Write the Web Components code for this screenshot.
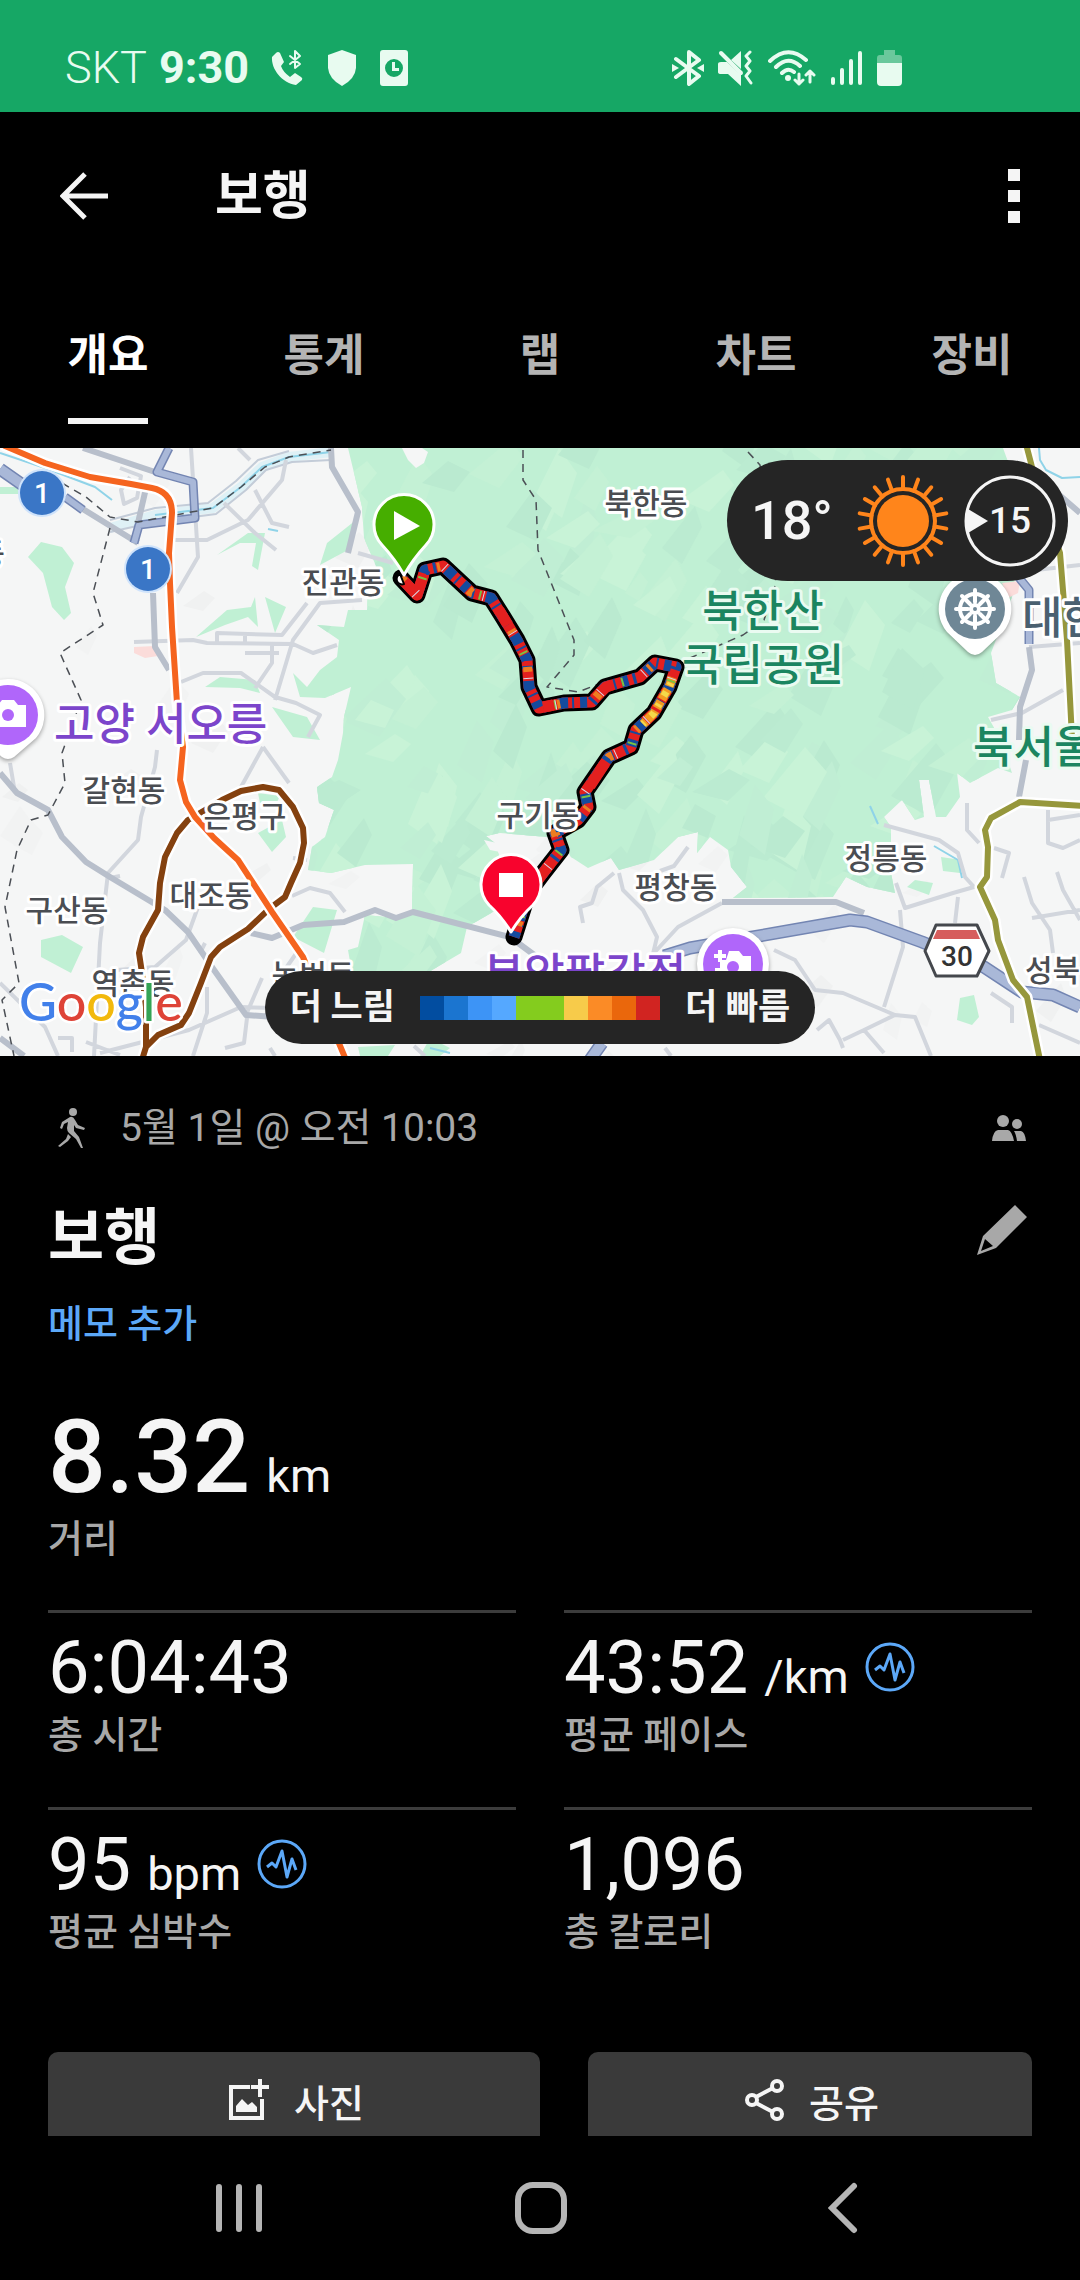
<!DOCTYPE html>
<html lang="ko">
<head>
<meta charset="utf-8">
<meta name="viewport" content="width=device-width, initial-scale=1">
<title>보행</title>
<style>
  body {
    margin: 0;
    background: #000;
    color: #f5f5f5;
    font-family: Roboto, "Noto Sans CJK KR", sans-serif;
    --muted: #a8a8a8;
    --link: #5ca8f8;
    --panel: #252525;
  }
</style>
</head>
<body>
<activity-app>
  <status-bar slot="status"></status-bar>
  <app-bar slot="top" label="보행"></app-bar>
  <tab-bar slot="top" labels="개요,통계,랩,차트,장비"></tab-bar>

  <route-map>
    <weather-pill slot="weather" temp="18°" wind="15"></weather-pill>
    <speed-legend slot="legend" slow="더 느림" fast="더 빠름"></speed-legend>
  </route-map>

  <activity-header>
    <span slot="date">5월 1일 @ 오전 10:03</span>
    <span slot="title">보행</span>
    <span slot="memo">메모 추가</span>
  </activity-header>

  <stat-item large value="8.32" unit="km">거리</stat-item>
  <stat-grid>
    <stat-item value="6:04:43">총 시간</stat-item>
    <stat-item value="43:52" unit="/km" chart>평균 페이스</stat-item>
    <stat-item value="95" unit="bpm" chart>평균 심박수</stat-item>
    <stat-item value="1,096">총 칼로리</stat-item>
  </stat-grid>

  <action-row>
    <action-button icon="photo">사진</action-button>
    <action-button icon="share">공유</action-button>
  </action-row>

  <system-nav slot="nav"></system-nav>
</activity-app>

<script>
// small helper shared by every element: clone a template into an open shadow root
function attach(host, html) {
  const template = document.createElement("template");
  template.innerHTML = html;
  const root = host.attachShadow({ mode: "open" });
  root.appendChild(template.content.cloneNode(true));
  return root;
}

const buttonReset = `
  button {
    margin: 0;
    padding: 0;
    border: 0;
    background: none;
    color: inherit;
    font: inherit;
    cursor: pointer;
  }
  svg { display: block; flex: none; }
`;

class ActivityApp extends HTMLElement {
  constructor() {
    super();
    attach(this, `
      <style>
        :host { display: flex; flex-direction: column; height: 100vh; }
        main { flex: 1; min-height: 0; overflow: hidden; }
      </style>
      <slot name="status"></slot>
      <slot name="top"></slot>
      <main><slot></slot></main>
      <slot name="nav"></slot>`);
  }
}

class StatusBar extends HTMLElement {
  constructor() {
    super();
    attach(this, `
      <style>
        :host {
          display: flex;
          justify-content: space-between;
          box-sizing: border-box;
          height: 112px;
          padding: 24px 178px 0 65px;
          background: #16a765;
          color: #e8fbf0;
        }
        div { display: flex; align-items: center; }
        .left { gap: 22px; }
        .right { gap: 14px; }
        .text { gap: 12px; font-size: 45px; line-height: 56px; }
        .carrier { font-weight: 300; }
        .time { font-weight: 700; }
        svg { display: block; fill: currentColor; }
        .line { fill: none; stroke: currentColor; stroke-width: 4; stroke-linecap: round; stroke-linejoin: round; }
      </style>
      <div class="left">
        <div class="text"><span class="carrier">SKT</span><span class="time">9:30</span></div>
        <svg width="34" height="36" viewBox="0 0 34 36">
          <path d="M5 3 1 7C0 19 11 33 25 35L31 30Q32 28 30 27L24 23 19 27Q12 22 10 16L13 12 9 3Q7 1 5 3Z"/>
          <path class="line" style="stroke-width:2" d="M19 6 29 14 24 18V1L29 6 19 14"/>
        </svg>
        <svg width="30" height="36" viewBox="-1 0 30 36"><path d="M14 0 28 5V18Q27 29 14 36 1 29 0 18V5Z"/></svg>
        <svg width="30" height="36" viewBox="-1 0 30 36">
          <path fill-rule="evenodd" d="M3 0H25Q28 0 28 3V33Q28 36 25 36H3Q0 36 0 33V3Q0 0 3 0ZM14 9A9 9 0 1 0 14 27 9 9 0 1 0 14 9ZM12 12H15V18H19V21H12Z"/>
        </svg>
      </div>
      <div class="right">
        <svg width="32" height="36" viewBox="0 0 32 36">
          <path class="line" d="M4 9 27 26 17 34V2L27 10 4 27"/><path d="M0 14 7 18 0 22ZM32 14 25 18 32 22Z"/>
        </svg>
        <svg width="36" height="36" viewBox="0 0 36 36">
          <path d="M0 14Q0 12 3 12H9L23 25V36L10 24H3Q0 24 0 22ZM13 10 23 1V19Z"/>
          <path class="line" d="M3 3 23 23"/>
          <path class="line" style="stroke-width:3" d="M32 2 28 6 32 11 28 16 32 21 28 26 33 33"/>
        </svg>
        <svg width="48" height="36" viewBox="0 0 48 36">
          <path class="line" d="M2 11Q20-6 38 10M8 17Q20 5 32 16M14 23Q20 17 26 22"/>
          <circle cx="20" cy="28" r="3"/>
          <path class="line" style="stroke-width:3" d="M31 24V34M27 30 31 34 35 30M42 32V21M38 25 42 21 46 25"/>
        </svg>
        <svg width="33" height="36" viewBox="0 0 33 36">
          <path class="line" d="M3 29V33M12 20V33M21 11V33M30 3V33"/>
        </svg>
        <svg width="25" height="36" viewBox="0 0 25 36">
          <path opacity=".4" d="M7 0H18V5H22Q25 5 25 8V14H0V8Q0 5 3 5H7Z"/>
          <path d="M0 13H25V32Q25 36 21 36H4Q0 36 0 32Z"/>
        </svg>
      </div>`);
  }
}

class AppBar extends HTMLElement {
  constructor() {
    super();
    const root = attach(this, `
      <style>
        ${buttonReset}
        :host { display: flex; align-items: center; height: 168px; padding: 0 60px; }
        h1 { flex: 1; margin: 0 0 0 107px; padding-top: 2px; font-size: 52px; line-height: 72px; font-weight: 700; }
      </style>
      <button aria-label="뒤로">
        <svg width="48" height="48" viewBox="0 0 48 48" fill="none" stroke="#f5f5f5" stroke-width="5">
          <path d="M25 2 3 24 25 46M3 24H48"/>
        </svg>
      </button>
      <h1></h1>
      <button aria-label="더보기">
        <svg width="12" height="54" viewBox="0 0 12 54" fill="#f5f5f5">
          <path d="M0 0H12V12H0ZM0 21H12V33H0ZM0 42H12V54H0Z"/>
        </svg>
      </button>`);
    root.querySelector("h1").textContent = this.getAttribute("label");
  }
}

class TabBar extends HTMLElement {
  constructor() {
    super();
    const root = attach(this, `
      <style>
        ${buttonReset}
        :host { display: block; }
        nav { display: grid; grid-auto-flow: column; grid-auto-columns: 1fr; height: 168px; }
        button { display: flex; justify-content: center; align-items: flex-end; padding-bottom: 24px; color: #b4b4b4; }
        span {
          padding-bottom: 28px;
          border-bottom: 6px solid transparent;
          font-size: 44px;
          line-height: 68px;
          font-weight: 700;
        }
        [aria-selected="true"] { color: #fff; }
        [aria-selected="true"] span { border-color: #f5f5f5; }
      </style>
      <nav role="tablist"></nav>`);
    const nav = root.querySelector("nav");
    this.getAttribute("labels").split(",").forEach((label, i) => {
      const button = document.createElement("button");
      const text = document.createElement("span");
      text.textContent = label;
      button.setAttribute("role", "tab");
      button.setAttribute("aria-selected", i === 0);
      button.appendChild(text);
      nav.appendChild(button);
    });
    nav.addEventListener("click", (e) => {
      const picked = e.target.closest("button");
      if (!picked) return;
      nav.querySelectorAll("button").forEach((b) => b.setAttribute("aria-selected", b === picked));
    });
  }
}

const PARK = "M348 0 355 29 362 59 364 90 376 118 368 142 367 162 348 162 344 179 317 177 339 192 337 209 320 222 307 239 293 225 300 249 325 250 351 239 344 269 343 285 338 312 332 329 317 339 319 355 334 362 325 389 312 399 308 422 331 425 365 417 413 416 412 462 396 470 365 467 358 499 348 502 352 525 427 525 461 505 467 479 500 460 500 410 495 395 486 388 500 385 560 390 571 409 588 420 611 410 619 422 654 412 678 389 698 384 697 405 710 389 728 402 731 419 747 439 733 450 833 449 846 429 867 439 895 445 891 425 891 379 884 369 902 352 915 372 924 369 919 332 929 332 936 369 946 369 960 349 957 325 970 335 998 320 1012 325 1001 292 988 269 1012 262 1020 249 996 235 991 205 1012 149 1025 60 1003 0Z";
const ROUTE = "M401 130 417 147 425 122 443 118 458 132 472 145 491 150 503 169 517 192 527 212 529 239 539 260 564 255 592 254 605 239 640 229 655 215 676 219 669 239 654 265 636 282 631 299 609 309 585 344 588 359 578 372 555 385 561 402 543 425 528 445 514 489";
const PATCHES = "M28 109 41 94 62 99 74 115 65 139 71 165 64 172 52 159 43 125ZM217 107 248 85 265 85 258 122 252 118 256 95 240 95ZM356 72 348 102 320 117 327 95ZM196 189 227 162 251 159 255 149 258 179 248 169 225 177ZM265 149 286 159 275 185ZM205 239 220 229 255 232 260 245 240 240ZM272 259 307 269 320 292 293 289ZM258 385 282 372 286 389 272 404ZM313 459 337 462 324 505 293 489ZM41 492 62 487 83 499 71 525 41 509ZM358 599 395 597 388 608 360 608ZM941 409 962 412 960 425 943 423ZM907 439 915 432 933 435 929 447ZM960 550 974 547 979 569 972 577 957 572ZM0 39 18 39 18 46 0 46ZM258 345 280 348 275 358 260 355ZM430 590 450 600 440 608 420 608Z";
const MAIN_ROADS = "M65 50 138 95M153 145 155 199 169 222M83 0 155 24M331 0 332 19 358 64 348 105M146 40 138 75M0 325 17 345 48 362 62 389 86 414 110 429 165 462 188 484 214 522 246 567 275 569M251 485 272 490 303 477 344 474 375 462 396 470 413 464 510 489 537 509M1029 199 1032 222 1020 259 1019 292M1026 312 1019 349M722 454H836L864 465M1057 45 1080 65M0 590 24 608";
const SIDE_ROADS = "M157 302 155 319 141 369 138 392 108 425 100 495 94 608M263 299 241 339M263 299 289 335M198 459 186 492 155 519 117 522M100 605 189 582 241 559 272 560M0 535 45 579 58 608M207 539V565L193 608M86 594 120 607M134 194 193 192 207 195 293 196 313 205 337 197M181 234 203 225H241L275 249 296 255 320 267 308 289M362 152 320 155 293 192 275 252M307 155 282 187 217 185V194M191 0 198 109 177 145M172 92H207L248 72 282 32 286 12M224 55 255 85 276 102M255 42 272 75 289 79M358 105 393 115M245 185V194M245 205H279M272 195V215L255 240M238 0 250 12M120 20 141 28 137 50 124 56 121 42 130 29M991 272 1022 265 1063 242M1029 199 1080 195M1036 122 1080 117M722 455 678 479 654 505M619 425 623 442 643 462 657 489 652 510M614 425 597 439 592 455 580 459 583 475M688 399 674 418 660 423M884 377 939 392 958 405 965 429 974 439 953 445 905 460 896 435M900 462 903 499 884 559M958 449 955 475M774 502 795 512 815 542 843 545 895 567 915 569 931 608M895 567 864 582 884 605M843 600 840 592 829 572 817 582M864 582 843 592M1024 429 1032 455 1050 482 1053 505M1057 424 1063 442 1080 472M1032 470 1080 462M1048 362V395L1063 400 1080 392M1048 372 1080 367M991 545 1012 559V575M1039 577 1080 595M967 355V382L979 395M994 400 1009 405 1002 430M247 570 244 595 225 600M58 590H72V604M293 410 307 412M292 448 310 440 330 445 345 464M270 600 275 608M414 598 425 608M110 430 120 428M665 600 671 608M10 315 15 345M200 505 205 495M286 520 300 500M262 530 246 567";

class RouteMap extends HTMLElement {
  constructor() {
    super();
    const root = attach(this, `
      <style>
        :host { display: block; position: relative; height: 608px; overflow: hidden; background: #f5f6f6; }
        svg { display: block; width: 100%; height: 100%; }
        .weather { position: absolute; top: 12px; right: 12px; }
        .legend { position: absolute; left: 0; right: 0; bottom: 12px; display: flex; justify-content: center; }
        path, polyline { fill: none; stroke-linejoin: round; }
        .fill { stroke: none; }
        text {
          font-family: Roboto, "Noto Sans CJK KR", sans-serif;
          font-weight: 500;
          font-size: 30px;
          fill: #4a4d52;
          text-anchor: middle;
          paint-order: stroke;
          stroke: #fff;
          stroke-width: 6px;
          stroke-linejoin: round;
        }
        .big { font-size: 44px; }
        .start { text-anchor: start; }
        .park { fill: #1b8560; stroke: #eafbf1; }
        .poi { fill: #7c45cb; }
        .slate { fill: #4a6070; }
        .shield { font-size: 28px; stroke: none; }
        .google { font-family: Lato, sans-serif; font-size: 52px; font-weight: 500; stroke-width: 5px; }
        .google tspan { paint-order: stroke; }
      </style>
      <svg viewBox="0 0 1080 608" preserveAspectRatio="xMidYMid slice">
        <clipPath id="parkClip"><path d="${PARK}"/></clipPath>
        <g id="hills"></g>
        <path class="fill" style="fill:#c0f0d4" d="${PARK}"/>
        <g id="facets" clip-path="url(#parkClip)"></g>
        <path class="fill" style="fill:#c0f0d4" d="${PATCHES}"/>
        <path class="fill" style="fill:#f5f6f6" d="M402 0 408 12 416 20 424 15 428 4 422 0ZM484 392 497 395 500 404 490 402Z"/>
        <path class="fill" style="fill:#fbdcda" d="M134 199 155 198 158 208 145 210 134 205ZM1002 135 1020 133 1018 145 1008 150Z"/>

        <path stroke="#dff1f6" stroke-width="10" d="M110 80 155 67 213 60 241 39 262 19 289 9 331 4"/>
        <path stroke="#c3ccd8" stroke-width="2" d="M110 84 155 74 216 66 246 42 266 22 292 14 331 12M110 72 155 60 208 55 236 33 258 12 289 3"/>
        <path stroke="#8fd3e8" stroke-width="2" d="M0 5 45 20 95 39 112 52M155 67 213 60 241 39 262 19 289 9 331 4M1039 0 1040 12 1046 22 1062 30 1080 29M870 358 878 376M934 398 958 412 962 430M268 81 278 83M430 600 450 605"/>
        <path stroke="#d2d6dd" stroke-width="4" d="${SIDE_ROADS}"/>
        <path stroke="#b8bfcb" stroke-width="6" d="${MAIN_ROADS}"/>
        <path stroke="#7385b2" stroke-width="9" d="M169 0 157 24 193 34 195 70 139 77 134 95M65 49 83 62M1016 126 1029 142V196"/>
        <path stroke="#a9b8d8" stroke-width="6" d="M169 0 157 24 193 34 195 70 139 77 134 95M65 49 83 62M1016 126 1029 142V196"/>
        <path stroke="#7385b2" stroke-width="13" d="M0 21 30 42M664 508 690 500 753 489 850 472 867 474 922 494 984 519 1022 544 1053 547 1080 559M602 595 590 612"/>
        <path stroke="#a9b8d8" stroke-width="10" d="M0 21 30 42M664 508 690 500 753 489 850 472 867 474 922 494 984 519 1022 544 1053 547 1080 559M602 595 590 612"/>
        <path stroke="#4b4f55" stroke-width="1.5" stroke-dasharray="8 6" d="M62 35 86 49 110 69 138 74 213 60 241 39 265 19 289 9 331 2M110 80 93 145 103 177 60 205 81 252 62 305 65 335 48 367 31 372 17 402 5 459 19 535 2 552 14 608M523 2V32L536 52 538 102 574 192 574 207 547 239 578 244 609 232M748 4 760 17 776 135 764 172 743 187 690 210"/>

        <g id="transit" stroke-linecap="round">
          <path stroke="#fff" stroke-width="11" d="M142 612 146 599 158 587 181 577 189 565 201 535 211 509 220 499 248 481 269 461 285 449 291 435 300 415 304 395 303 380 293 359 279 342 263 339 241 343 222 352 188 372 177 385 165 409 160 435 158 462 143 489 139 505 142 525 146 559 146 599"/>
          <path stroke="#84410f" stroke-width="6" d="M142 612 146 599 158 587 181 577 189 565 201 535 211 509 220 499 248 481 269 461 285 449 291 435 300 415 304 395 303 380 293 359 279 342 263 339 241 343 222 352 188 372 177 385 165 409 160 435 158 462 143 489 139 505 142 525 146 559 146 599"/>
          <path stroke="#fff" stroke-width="11" d="M1026 -4 1032 19 1060 105 1067 192 1073 310M1084 358 1020 354 991 370 985 382 988 399 987 429 980 439 995 472 998 492 1013 532 1027 549 1040 612"/>
          <path stroke="#96973c" stroke-width="6" d="M1026 -4 1032 19 1060 105 1067 192 1073 310M1084 358 1020 354 991 370 985 382 988 399 987 429 980 439 995 472 998 492 1013 532 1027 549 1040 612"/>
          <path stroke="#fff" stroke-width="11" d="M5 -2 45 15 90 29 131 36 152 40Q172 44 172 65L169 105 170 135 172 179 177 255 183 299 180 332 186 354 195 369 214 390 238 412 253 435 272 464 303 509 346 612"/>
          <path stroke="#f5641f" stroke-width="6" d="M5 -2 45 15 90 29 131 36 152 40Q172 44 172 65L169 105 170 135 172 179 177 255 183 299 180 332 186 354 195 369 214 390 238 412 253 435 272 464 303 509 346 612"/>
        </g>

        <g>
          <circle cx="42" cy="45" r="24" fill="#cfe3fb"/><circle cx="42" cy="45" r="22" fill="#3a76c6"/>
          <text class="shield" style="fill:#fff" x="42" y="55">1</text>
          <circle cx="148" cy="121" r="24" fill="#cfe3fb"/><circle cx="148" cy="121" r="22" fill="#3a76c6"/>
          <text class="shield" style="fill:#fff" x="148" y="131">1</text>
          <path style="fill:#fff" stroke="#45484d" stroke-width="3" d="M936 477H977L989 503 977 528H936L925 503Z"/>
          <path class="fill" style="fill:#d65d5d" d="M937 482H976L980 491H933Z"/>
          <text class="shield" style="fill:#333" x="957" y="518">30</text>
        </g>

        <text class="big poi start" x="54" y="292">고양 서오릉</text>
        <text class="big poi" x="585" y="542">부암팔각정</text>
        <text class="big park" x="763" y="179">북한산</text>
        <text class="big park" x="763" y="233">국립공원</text>
        <text class="big park start" x="973" y="315">북서울</text>
        <text class="big slate start" x="1022" y="186">대한</text>

        <text x="-9" y="116">동</text>
        <text x="343" y="145">진관동</text>
        <text x="646" y="66">북한동</text>
        <text x="124" y="353">갈현동</text>
        <text x="245" y="379">은평구</text>
        <text x="211" y="458">대조동</text>
        <text x="67" y="473">구산동</text>
        <text x="133" y="546">역촌동</text>
        <text x="313" y="538">녹번동</text>
        <text x="676" y="450">평창동</text>
        <text x="886" y="421">정릉동</text>
        <text class="start" x="1025" y="533">성북동</text>

        <g filter="drop-shadow(0 2px 2px rgba(0,0,0,.35))">
          <path class="fill" style="fill:#fff" d="M8 231A36 36 0 0 1 36 290L14 309Q8 313 2 309L-20 290A36 36 0 0 1 8 231Z"/>
          <path class="fill" style="fill:#fff" d="M733 480A36 36 0 1 1 733 552 36 36 0 1 1 733 480Z"/>
          <path class="fill" style="fill:#fff" d="M975 125A36 36 0 0 1 1003 184L982 204Q975 210 968 204L947 184A36 36 0 0 1 975 125Z"/>
        </g>
        <circle cx="8" cy="267" r="30" fill="#b066fa"/>
        <path class="fill" style="fill:#fff" d="M-8 257H-2L2 252H14L18 257H26V279H-8Z"/><circle cx="8" cy="267" r="6" fill="#b066fa"/>
        <circle cx="733" cy="516" r="30" fill="#b066fa"/>
        <path class="fill" style="fill:#fff" d="M720 512H726L729 503H739L743 508H751V530H715V520H720ZM718 502H722V506H726V510H722V514H718V510H714V506H718Z"/><circle cx="733" cy="519" r="6" fill="#b066fa"/>
        <circle cx="975" cy="161" r="30" fill="#6f8796"/>
        <g id="wheel" stroke="#fff" stroke-width="4" stroke-linecap="round" fill="none">
          <circle cx="975" cy="161" r="15"/><circle cx="975" cy="161" r="4"/>
          <path d="M975 142V154M975 168V180M956 161H968M982 161H994M962 148 970 156M980 166 988 174M962 174 970 166M980 156 988 148"/>
        </g>

        <path stroke="#000" stroke-width="17" stroke-linecap="round" d="${ROUTE}"/>
        <path stroke="#e3201f" stroke-width="11" d="${ROUTE}"/>
        <path stroke="#144b9e" stroke-width="11" stroke-dasharray="7 5 3 12 10 4 2 6" stroke-dashoffset="-46" d="${ROUTE}"/>
        <path stroke="#e3201f" stroke-width="11" d="M403 132 417 147 424 126M499 162 508 177M543 259 553 257M594 251 606 239 612 237M605 315 590 338M550 416 528 445"/>
        <path stroke="#ee7d20" stroke-width="9" stroke-dasharray="3 38 5 57" stroke-dashoffset="-62" d="${ROUTE}"/>
        <path stroke="#f39a22" stroke-width="9" stroke-dasharray="8 3 12 2" d="M672 231 669 239 654 265 643 276"/>
        <path stroke="#f4d94a" stroke-width="7" stroke-dasharray="3 7 5 9" d="M671 235 669 239 654 265 643 276"/>
        <path stroke="#7cc142" stroke-width="9" stroke-dasharray="2 73" stroke-dashoffset="-40" d="${ROUTE}"/>
        <path stroke="#d9dbea" stroke-width="10" stroke-dasharray="1 48" stroke-dashoffset="-70" d="${ROUTE}"/>
        <text x="538" y="378">구기동</text>

        <path stroke="#000" stroke-width="2" style="fill:#fff" d="M400 126A5 5 0 0 0 404 136Z"/>
        <path style="fill:#46ae00" stroke="#fff" stroke-width="3" d="M404 127Q395 111 382 97A30 30 0 1 1 426 97Q413 111 404 127Z"/>
        <path class="fill" style="fill:#fff" d="M394 63V92L420 78Z"/>
        <path style="fill:#f8032d" stroke="#fff" stroke-width="3" d="M511 484Q502 469 489 457A30 30 0 1 1 533 457Q520 469 511 484Z"/>
        <path class="fill" style="fill:#fff" d="M499 425H523V449H499Z"/>

        <text class="google start" x="19" y="573"><tspan fill="#4280ea">G</tspan><tspan fill="#de4337">o</tspan><tspan fill="#f2b90c">o</tspan><tspan fill="#4280ea">g</tspan><tspan fill="#34a455">l</tspan><tspan fill="#de4337">e</tspan></text>
      </svg>
      <div class="weather"><slot name="weather"></slot></div>
      <div class="legend"><slot name="legend"></slot></div>`);
    this.drawTerrain(root);
  }

  // shaded relief: long thin facets running down to the south west, same seed on every load
  drawTerrain(root) {
    let seed = 7;
    const rand = () => (seed = (seed * 16807) % 2147483647) / 2147483647;
    const facet = (x, y, size) => {
      const dx = size * (0.4 + rand());
      const dy = size * (0.6 + rand());
      const w = size * (0.2 + rand() * 0.5);
      return `M${x | 0} ${y | 0}l${dx | 0} ${-dy | 0} ${w | 0} ${(dy * 0.5) | 0} ${(-dx * 0.6) | 0} ${(dy * 0.9) | 0}Z`;
    };
    const fill = (id, count, x0, width, colors, size) => {
      let html = "";
      for (let i = 0; i < count; i++) {
        const d = facet(x0 + rand() * width, rand() * 640, size);
        html += `<path class="fill" style="fill:${colors[i % colors.length]}" d="${d}"/>`;
      }
      root.getElementById(id).innerHTML = html;
    };
    fill("facets", 320, 270, 740, ["#bbebd1", "#c8f3d7", "#c0eed4", "#c4f1d5", "#baead0"], 34);
    fill("hills", 60, 0, 1080, ["#f2f3f3", "#f0f1f1"], 20);
  }
}

class WeatherPill extends HTMLElement {
  constructor() {
    super();
    const rays = Array.from({ length: 18 }, (_, i) => `<path d="M46 2V14" transform="rotate(${i * 20} 46 46)"/>`).join("");
    attach(this, `
      <style>
        :host {
          display: flex;
          align-items: center;
          box-sizing: border-box;
          height: 121px;
          padding: 0 12px 0 24px;
          border-radius: 61px;
          background: var(--panel);
          font-weight: 500;
        }
        .temp { font-size: 54px; }
        svg { display: block; margin: 0 15px 0 24px; }
        .wind { position: relative; display: grid; place-items: center; width: 92px; height: 92px; font-size: 37px; }
        .wind svg { position: absolute; inset: 0; margin: 0; }
      </style>
      <span class="temp">${this.getAttribute("temp")}</span>
      <svg width="92" height="92" viewBox="0 0 92 92" fill="none" stroke="#ff851b" stroke-width="4" stroke-linecap="round">
        ${rays}
        <circle cx="46" cy="46" r="32"/>
        <circle cx="46" cy="46" r="26" fill="#ff851b" stroke="none"/>
      </svg>
      <div class="wind">
        <svg width="92" height="92" viewBox="0 0 92 92">
          <circle cx="46" cy="46" r="44" fill="none" stroke="#f5f5f5" stroke-width="3"/>
          <path fill="#f5f5f5" d="M4 34 24 46 4 58Q1 46 4 34Z"/>
        </svg>
        <span>${this.getAttribute("wind")}</span>
      </div>`);
  }
}

class SpeedLegend extends HTMLElement {
  constructor() {
    super();
    const colors = ["#024da0", "#1b75d0", "#3d94f6", "#55a8ff", "#84cc1e", "#84cc1e", "#f7cb4a", "#fb8b26", "#ea670c", "#d12421"];
    attach(this, `
      <style>
        :host {
          display: flex;
          align-items: center;
          gap: 25px;
          height: 73px;
          padding: 0 25px;
          border-radius: 37px;
          background: var(--panel);
          font-size: 35px;
          line-height: 48px;
          font-weight: 700;
        }
        div { display: flex; }
        i { width: 24px; height: 24px; }
      </style>
      <span>${this.getAttribute("slow")}</span>
      <div>${colors.map((c) => `<i style="background:${c}"></i>`).join("")}</div>
      <span>${this.getAttribute("fast")}</span>`);
  }
}

class ActivityHeader extends HTMLElement {
  constructor() {
    super();
    attach(this, `
      <style>
        ${buttonReset}
        :host { display: block; padding: 44px 48px 0; }
        div { display: flex; align-items: center; justify-content: space-between; }
        .meta { height: 56px; color: var(--muted); font-size: 39px; line-height: 56px; }
        .meta span { flex: 1; padding-left: 34px; }
        .meta svg:last-child { margin-right: 6px; }
        .title { margin-top: 34px; height: 96px; }
        .title svg { margin: 0 5px 16px 0; }
        h2 { margin: 0; font-size: 61px; line-height: 96px; font-weight: 700; }
        a { display: inline-block; margin-top: 10px; color: var(--link); font-size: 38px; line-height: 56px; font-weight: 500; text-decoration: none; }
      </style>
      <div class="meta">
        <svg width="38" height="40" viewBox="-10 0 38 40" fill="#a8a8a8">
          <circle cx="15" cy="4" r="4"/>
          <path d="M12 9Q15 8 17 12L20 17 27 20 26 22 18 20 16 17 16 23 21 29 25 40 23 40 18 31 11 25Q9 23 9 20L10 14 6 16 4 21 2 20 4 14ZM10 26 13 29 10 33 2 39 0 38 8 31Z"/>
        </svg>
        <span><slot name="date"></slot></span>
        <svg width="34" height="26" viewBox="0 0 34 26" fill="#a8a8a8">
          <circle cx="11" cy="6" r="6"/><circle cx="25" cy="9" r="5"/>
          <path d="M0 26Q1 16 6 15H16Q20 16 22 26ZM22 16H29Q33 17 34 26H25Q24 19 22 16Z"/>
        </svg>
      </div>
      <div class="title">
        <h2><slot name="title"></slot></h2>
        <button aria-label="편집">
          <svg width="50" height="50" viewBox="0 0 50 50" fill="#a8a8a8">
            <path fill-rule="evenodd" d="M38 0 50 12 19 43 0 50 6 31ZM8 34 4 46 16 41Z"/>
          </svg>
        </button>
      </div>
      <a href="#"><slot name="memo"></slot></a>`);
  }
}

class StatItem extends HTMLElement {
  constructor() {
    super();
    const unit = this.getAttribute("unit");
    const chart = `
      <svg width="50" height="50" viewBox="0 0 50 50" fill="none" stroke="#5ca8f8" stroke-width="3" stroke-linejoin="round">
        <circle cx="25" cy="25" r="23"/>
        <path d="M10 28 15 24 19 28 25 12 30 38 35 20 39 31"/>
      </svg>`;
    attach(this, `
      <style>
        :host { display: block; }
        .value { display: flex; align-items: baseline; gap: 16px; font-size: 74px; line-height: 84px; }
        .unit { font-size: 47px; line-height: 56px; }
        .value svg { align-self: flex-start; margin-top: 16px; }
        .label { color: var(--muted); font-size: 38px; line-height: 50px; font-weight: 500; }
        :host([large]) { padding: 48px 48px 0; }
        :host([large]) .value { font-size: 102px; line-height: 114px; }
        :host([large]) .number { font-weight: 500; }
      </style>
      <div class="value">
        <span class="number">${this.getAttribute("value")}</span>
        ${unit ? `<span class="unit">${unit}</span>` : ""}
        ${this.hasAttribute("chart") ? chart : ""}
      </div>
      <div class="label"><slot></slot></div>`);
  }
}

class StatGrid extends HTMLElement {
  constructor() {
    super();
    attach(this, `
      <style>
        :host { display: grid; grid-template-columns: 1fr 1fr; column-gap: 48px; padding: 46px 48px 0; }
        ::slotted(*) { height: 181px; padding-top: 13px; border-top: 3px solid #3c3c3c; }
      </style>
      <slot></slot>`);
  }
}

class ActionRow extends HTMLElement {
  constructor() {
    super();
    attach(this, `
      <style>
        :host { display: grid; grid-template-columns: 41fr 37fr; gap: 48px; padding: 48px 48px 0; }
      </style>
      <slot></slot>`);
  }
}

const actionIcons = {
  photo: `<svg width="42" height="42" viewBox="0 0 42 42" fill="none" stroke="#f5f5f5" stroke-width="4">
      <path d="M22 8H3V39H34V20M32 0V18M23 8H41"/>
      <path fill="#f5f5f5" stroke="none" d="M8 33V27L14 20 20 26 24 23 29 28V33Z"/>
    </svg>`,
  share: `<svg width="40" height="42" viewBox="0 0 40 42" fill="none" stroke="#f5f5f5" stroke-width="4">
      <circle cx="7" cy="21" r="5"/><circle cx="32" cy="7" r="5"/><circle cx="32" cy="35" r="5"/>
      <path d="M11 18 28 9M11 24 28 33"/>
    </svg>`,
};

class ActionButton extends HTMLElement {
  constructor() {
    super();
    attach(this, `
      <style>
        ${buttonReset}
        :host { display: block; }
        button {
          display: flex;
          align-items: center;
          justify-content: center;
          gap: 24px;
          width: 100%;
          height: 96px;
          padding-left: 4px;
          border-radius: 10px;
          background: #3a3a3a;
          font-size: 38px;
          font-weight: 500;
        }
      </style>
      <button>${actionIcons[this.getAttribute("icon")]}<slot></slot></button>`);
  }
}

class SystemNav extends HTMLElement {
  constructor() {
    super();
    attach(this, `
      <style>
        ${buttonReset}
        :host {
          display: grid;
          grid-template-columns: repeat(3, 1fr);
          align-items: center;
          justify-items: center;
          height: 144px;
          padding: 0 86px 0 88px;
          background: #000;
        }
        svg { fill: none; stroke: #b5b5b5; stroke-width: 6; stroke-linecap: round; }
      </style>
      <button aria-label="최근 앱"><svg width="48" height="54" viewBox="0 0 48 54"><path d="M4 6V48M24 6V48M44 6V48"/></svg></button>
      <button aria-label="홈"><svg width="54" height="54" viewBox="0 0 54 54"><rect x="4" y="4" width="46" height="46" rx="15"/></svg></button>
      <button aria-label="이전"><svg width="30" height="54" viewBox="0 0 30 54"><path d="M26 5 4 27 26 49"/></svg></button>`);
  }
}

customElements.define("activity-app", ActivityApp);
customElements.define("status-bar", StatusBar);
customElements.define("app-bar", AppBar);
customElements.define("tab-bar", TabBar);
customElements.define("route-map", RouteMap);
customElements.define("weather-pill", WeatherPill);
customElements.define("speed-legend", SpeedLegend);
customElements.define("activity-header", ActivityHeader);
customElements.define("stat-item", StatItem);
customElements.define("stat-grid", StatGrid);
customElements.define("action-row", ActionRow);
customElements.define("action-button", ActionButton);
customElements.define("system-nav", SystemNav);
</script>
</body>
</html>
